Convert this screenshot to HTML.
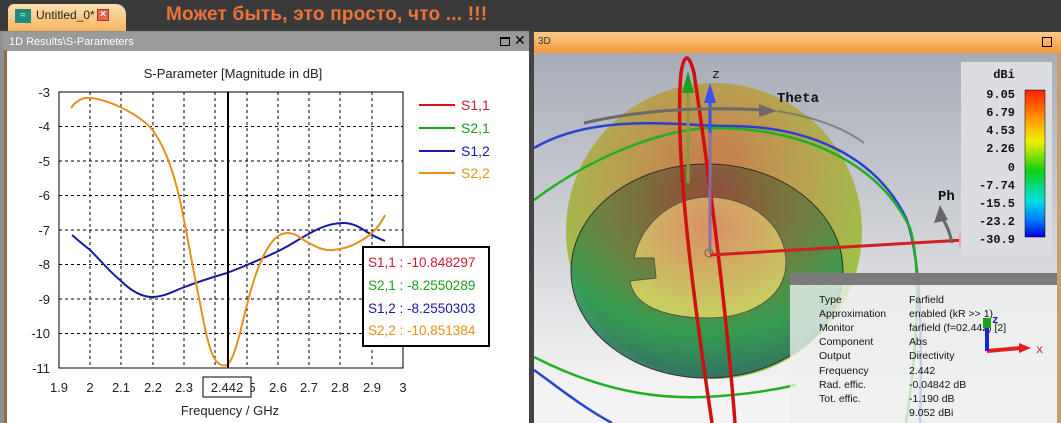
<!DOCTYPE html>
<html><head><meta charset="utf-8"><style>
*{margin:0;padding:0;box-sizing:border-box}
body{width:1061px;height:423px;overflow:hidden;background:#3c3c3c;font-family:"Liberation Sans",sans-serif;position:relative}
.a{position:absolute}
</style></head><body>
<div class="a" style="left:0;top:0;width:1061px;height:30px;background:#3a3a3a"></div>
<div class="a" style="left:8px;top:4px;width:118px;height:28px;background:linear-gradient(#fde0b0,#f7b25c);border-radius:6px 10px 0 0"></div>
<div class="a" style="left:15px;top:9px;width:16px;height:14px;background:#1e8a80;color:#cfe;font-size:10px;line-height:14px;text-align:center">≈</div>
<div class="a" style="left:36px;top:8px;font-size:12px;color:#222">Untitled_0*</div>
<div class="a" style="left:97px;top:9px;width:12px;height:12px;background:#e2674b;border:1px solid #a33;color:#fff;font-size:10px;line-height:10px;text-align:center;font-weight:bold">×</div>
<div class="a" style="left:166px;top:4px;font-size:19px;font-weight:bold;color:#f0743a;letter-spacing:0.2px">Может быть, это просто, что ... !!!</div>
<div class="a" style="left:0;top:31px;width:531px;height:392px;background:#8f8f8f"></div>
<div class="a" style="left:3px;top:32px;width:527px;height:19px;background:#9a9a9a"></div>
<div class="a" style="left:9px;top:36px;font-size:11px;color:#fff">1D Results\S-Parameters</div>
<div class="a" style="left:500px;top:37px;width:10px;height:9px;border:1.5px solid #000;border-top-width:2px"></div>
<div class="a" style="left:514px;top:32px;font-size:14px;color:#000">✕</div>
<div class="a" style="left:4px;top:50px;width:3px;height:373px;background:#8a7050"></div>
<div class="a" style="left:7px;top:51px;width:522px;height:372px;background:#fff"></div>
<div class="a" style="left:529px;top:31px;width:5px;height:392px;background:#444"></div>
<svg class="a" style="left:0;top:0" width="531" height="423" font-family="Liberation Sans,sans-serif">
<text x="233" y="78" font-size="13" text-anchor="middle" fill="#222">S-Parameter [Magnitude in dB]</text>
<g stroke="#000" stroke-dasharray="3,3" stroke-width="1">
<line x1="90" y1="92" x2="90" y2="368"/><line x1="121" y1="92" x2="121" y2="368"/><line x1="153" y1="92" x2="153" y2="368"/><line x1="184" y1="92" x2="184" y2="368"/><line x1="215" y1="92" x2="215" y2="368"/><line x1="247" y1="92" x2="247" y2="368"/><line x1="278" y1="92" x2="278" y2="368"/><line x1="309" y1="92" x2="309" y2="368"/><line x1="340" y1="92" x2="340" y2="368"/><line x1="372" y1="92" x2="372" y2="368"/>
<line x1="59" y1="126.5" x2="403" y2="126.5"/><line x1="59" y1="161" x2="403" y2="161"/><line x1="59" y1="195.5" x2="403" y2="195.5"/><line x1="59" y1="230" x2="403" y2="230"/><line x1="59" y1="264.5" x2="403" y2="264.5"/><line x1="59" y1="299" x2="403" y2="299"/><line x1="59" y1="333.5" x2="403" y2="333.5"/>
</g>
<rect x="59" y="92" width="344" height="276" fill="none" stroke="#000"/>
<g font-size="13" fill="#222" text-anchor="end">
<text x="50" y="97">-3</text><text x="50" y="131">-4</text><text x="50" y="166">-5</text><text x="50" y="200">-6</text><text x="50" y="235">-7</text><text x="50" y="269">-8</text><text x="50" y="304">-9</text><text x="50" y="338">-10</text><text x="50" y="373">-11</text>
</g>
<g font-size="13" fill="#222" text-anchor="middle">
<text x="59" y="392">1.9</text><text x="90" y="392">2</text><text x="121" y="392">2.1</text><text x="153" y="392">2.2</text><text x="184" y="392">2.3</text><text x="252" y="392">5</text><text x="278" y="392">2.6</text><text x="309" y="392">2.7</text><text x="340" y="392">2.8</text><text x="372" y="392">2.9</text><text x="403" y="392">3</text>
<text x="230" y="415">Frequency / GHz</text>
</g>
<rect x="203" y="377" width="48" height="20" fill="#fff" stroke="#000"/>
<text x="227" y="392" font-size="13" fill="#222" text-anchor="middle">2.442</text>
<path d="M72,235 C80,242 85,246 90,250 C102,262 110,272 120,280 C132,292 142,297 152,297 C163,297 172,292 182,288 C200,281 213,277 227,273 C240,268 252,263 263,258 C275,253 285,248 293,243 C310,233 325,223 343,223 C355,223 362,229 367,232 C375,237 380,239 385,241" fill="none" stroke="#1a1aa0" stroke-width="2"/>
<path d="M71,108 C76,101 82,97 90,98 C102,99 112,103 122,108 C135,114 143,120 150,127 C165,145 175,175 182,210 C190,250 195,280 200,303 C205,330 210,355 217,362 C221,366 224,366 227,365 C233,360 236,347 240,333 C248,300 254,275 263,257 C270,242 278,233 287,233 C296,233 300,238 307,242 C318,248 325,251 333,250 C343,249 350,247 357,243 C368,237 378,230 385,215" fill="none" stroke="#e8901c" stroke-width="2"/>
<line x1="228" y1="92" x2="228" y2="368" stroke="#000" stroke-width="2"/>
<g stroke-width="2"><line x1="419" y1="105" x2="455" y2="105" stroke="#e0101a"/><line x1="419" y1="128" x2="455" y2="128" stroke="#1aa01a"/><line x1="419" y1="151" x2="455" y2="151" stroke="#1a1aa0"/><line x1="419" y1="173" x2="455" y2="173" stroke="#e8901c"/></g>
<g font-size="14"><text x="461" y="110" fill="#d01a30">S1,1</text><text x="461" y="133" fill="#1aa01a">S2,1</text><text x="461" y="156" fill="#1a1aa0">S1,2</text><text x="461" y="178" fill="#e8901c">S2,2</text></g>
<rect x="363" y="247" width="126" height="99" fill="#fff" stroke="#000" stroke-width="2"/>
<g font-size="13.5"><text x="368" y="267" fill="#d01a30">S1,1 : -10.848297</text><text x="368" y="290" fill="#1aa01a">S2,1 : -8.2550289</text><text x="368" y="313" fill="#1a1aa0">S1,2 : -8.2550303</text><text x="368" y="335" fill="#e8901c">S2,2 : -10.851384</text></g>
</svg>
<div class="a" style="left:534px;top:32px;width:527px;height:21px;background:linear-gradient(#fcc98a,#f49a3a)"></div>
<div class="a" style="left:538px;top:36px;font-size:10px;color:#333">3D</div>
<div class="a" style="left:1042px;top:37px;width:10px;height:10px;border:1.5px solid #000"></div>
<div class="a" style="left:534px;top:53px;width:523px;height:370px;background:linear-gradient(#a8adb7,#c8cbd1 40%,#f3f3f4 90%)"></div>
<div class="a" style="left:1057px;top:53px;width:4px;height:370px;background:#c8a070"></div>
<svg class="a" style="left:534px;top:53px" width="523" height="370" font-family="Liberation Mono,monospace">
<defs>
<radialGradient id="sp" cx="0.48" cy="0.3" r="0.62"><stop offset="0" stop-color="#c87a50"/><stop offset="0.5" stop-color="#b8a050"/><stop offset="1" stop-color="#9cc448"/></radialGradient>
<radialGradient id="dk" cx="0.5" cy="0.15" r="0.85"><stop offset="0" stop-color="#8a4a38"/><stop offset="0.45" stop-color="#6a7a40"/><stop offset="0.75" stop-color="#2a9a50"/><stop offset="1" stop-color="#2a6a66"/></radialGradient>
<radialGradient id="in" cx="0.5" cy="0.25" r="0.75"><stop offset="0" stop-color="#d89068"/><stop offset="1" stop-color="#c8d060"/></radialGradient>
<linearGradient id="cb" x1="0" y1="0" x2="0" y2="1"><stop offset="0" stop-color="#ff2000"/><stop offset="0.2" stop-color="#ff9a00"/><stop offset="0.35" stop-color="#f0f000"/><stop offset="0.55" stop-color="#10d010"/><stop offset="0.75" stop-color="#00e0e0"/><stop offset="0.88" stop-color="#0080ff"/><stop offset="1" stop-color="#0000e0"/></linearGradient>
</defs>
<ellipse cx="180" cy="178" rx="148" ry="148" fill="url(#sp)"/>
<ellipse cx="173" cy="218" rx="136" ry="107" fill="url(#dk)" stroke="#222" opacity="0.9"/>
<path d="M100,205 C108,168 140,144 174,144 C215,144 252,170 252,210 C252,245 215,265 175,265 C135,265 100,255 96,228 L122,225 L120,205Z" fill="url(#in)" stroke="#554"/>
<circle cx="175" cy="200" r="4" fill="none" stroke="#664"/>
<path d="M0,95 C60,60 140,72 190,73 C270,72 340,100 372,165 C388,205 388,300 386,370" fill="none" stroke="#2a40d0" stroke-width="2.5"/>
<path d="M0,147 C70,95 140,75 180,75 C270,75 345,110 376,175 C390,220 380,320 372,370" fill="none" stroke="#20b020" stroke-width="2.5"/>
<path d="M0,304 C80,345 140,345 170,344 C210,342 240,337 262,332" fill="none" stroke="#20b020" stroke-width="2.5"/>
<path d="M0,317 C25,335 50,355 78,370" fill="none" stroke="#2a40d0" stroke-width="2.5"/>
<path d="M178,370 C160,250 140,100 147,20 C150,0 155,0 160,20 C172,100 192,250 201,370" fill="none" stroke="#d01010" stroke-width="3.5"/>
<line x1="176" y1="200" x2="176" y2="45" stroke="#8a70a0" stroke-width="3"/>
<line x1="176" y1="80" x2="176" y2="45" stroke="#3a50ff" stroke-width="3"/>
<polygon points="170,50 176,30 182,50" fill="#3a50ff"/>
<line x1="154" y1="130" x2="154" y2="30" stroke="#8a9a40" stroke-width="3"/>
<polygon points="148,40 154,18 160,40" fill="#1aa01a"/>
<path d="M50,70 C110,56 170,54 230,57" fill="none" stroke="#6a6a6a" stroke-width="3"/>
<polygon points="225,51 243,58 225,64" fill="#6a6a6a"/>
<path d="M243,58 C280,64 310,75 330,90" fill="none" stroke="#6a6a6a" stroke-width="2" opacity="0.7"/>
<line x1="176" y1="202" x2="430" y2="187" stroke="#d02020" stroke-width="3"/>
<polygon points="425,180 448,186 425,194" fill="#f0a0a0"/>
<path d="M418,190 C416,180 413,172 408,165" fill="none" stroke="#666" stroke-width="3"/>
<polygon points="400,170 406,152 414,167" fill="#666"/>
<text x="178" y="25" font-size="13" fill="#111">z</text>
<text x="243" y="49" font-size="14" font-weight="bold" fill="#111">Theta</text>
<text x="404" y="147" font-size="14" font-weight="bold" fill="#111">Ph</text>
<rect x="427" y="9" width="91" height="193" fill="#dcdde0"/>
<text x="470" y="25" font-size="12" font-weight="bold" fill="#111" text-anchor="middle">dBi</text>
<rect x="491" y="37" width="20" height="147" fill="url(#cb)" stroke="#000" stroke-width="0.5"/>
<g font-size="12" font-weight="bold" fill="#111" text-anchor="end">
<text x="481" y="45">9.05</text><text x="481" y="63">6.79</text><text x="481" y="81">4.53</text><text x="481" y="99">2.26</text><text x="481" y="118">0</text><text x="481" y="136">-7.74</text><text x="481" y="154">-15.5</text><text x="481" y="172">-23.2</text><text x="481" y="190">-30.9</text>
</g>
<rect x="256" y="220" width="267" height="12" fill="#7a7a7a"/>
<rect x="256" y="232" width="267" height="138" fill="#eef0ee" opacity="0.8"/>
<g font-family="Liberation Sans,sans-serif" font-size="10.5" fill="#111">
<text x="285" y="250">Type</text><text x="285" y="264">Approximation</text><text x="285" y="278">Monitor</text><text x="285" y="292">Component</text><text x="285" y="306">Output</text><text x="285" y="321">Frequency</text><text x="285" y="335">Rad. effic.</text><text x="285" y="349">Tot. effic.</text>
<text x="375" y="250">Farfield</text><text x="375" y="264">enabled (kR &gt;&gt; 1)</text><text x="375" y="278">farfield (f=02.442) [2]</text><text x="375" y="292">Abs</text><text x="375" y="306">Directivity</text><text x="375" y="321">2.442</text><text x="375" y="335">-0.04842 dB</text><text x="375" y="349">-1.190 dB</text><text x="375" y="363">9.052 dBi</text>
</g>
<line x1="453" y1="298" x2="488" y2="295" stroke="#e02020" stroke-width="4"/>
<polygon points="485,290 497,295 485,300" fill="#e02020"/>
<line x1="453" y1="298" x2="453" y2="275" stroke="#2020d0" stroke-width="4"/>
<rect x="449" y="265" width="8" height="10" fill="#1aa01a"/>
<text x="458" y="270" font-size="11" fill="#2020d0" font-weight="bold">z</text>
<text x="502" y="300" font-size="12" fill="#d02020">x</text>
</svg>
</body></html>
